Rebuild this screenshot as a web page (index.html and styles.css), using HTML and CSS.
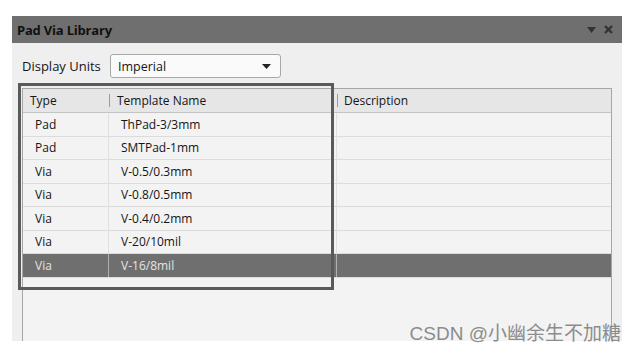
FILE: index.html
```html
<!DOCTYPE html>
<html lang="en">
<head>
  <meta charset="UTF-8">
  <title>Pad Via Library</title>
  <link rel="stylesheet" href="styles.css">
</head>
<body>
  <div class="panel">
    <div class="title-bar">
      <span class="title">Pad Via Library</span>
      <span class="title-icons">
        <svg width="9" height="6" viewBox="0 0 9 6"><path d="M0 0 L9 0 L4.5 6 Z" fill="#333"/></svg>
        <svg width="9" height="9" viewBox="0 0 9 9"><path d="M1 1 L8 8 M8 1 L1 8" stroke="#333" stroke-width="2.4"/></svg>
      </span>
    </div>
    <div class="panel-body">
      <div class="units-row">
        <label>Display Units</label>
        <div class="select">
          <span>Imperial</span>
          <svg width="9" height="5" viewBox="0 0 9 5"><path d="M0 0 L9 0 L4.5 5 Z" fill="#222"/></svg>
        </div>
      </div>
      <div class="grid">
        <div class="grid-row head">
          <div class="cell">Type</div>
          <div class="cell">Template Name</div>
          <div class="cell">Description</div>
        </div>
        <div class="grid-row"><div class="cell">Pad</div><div class="cell">ThPad-3/3mm</div><div class="cell"></div></div>
        <div class="grid-row"><div class="cell">Pad</div><div class="cell">SMTPad-1mm</div><div class="cell"></div></div>
        <div class="grid-row"><div class="cell">Via</div><div class="cell">V-0.5/0.3mm</div><div class="cell"></div></div>
        <div class="grid-row"><div class="cell">Via</div><div class="cell">V-0.8/0.5mm</div><div class="cell"></div></div>
        <div class="grid-row"><div class="cell">Via</div><div class="cell">V-0.4/0.2mm</div><div class="cell"></div></div>
        <div class="grid-row"><div class="cell">Via</div><div class="cell">V-20/10mil</div><div class="cell"></div></div>
        <div class="grid-row selected"><div class="cell">Via</div><div class="cell">V-16/8mil</div><div class="cell"></div></div>
      </div>
    </div>
    <div class="highlight-box"></div>
  </div>
  <div class="watermark">CSDN @小幽余生不加糖</div>
</body>
</html>
```

FILE: styles.css
```css
* {
  margin: 0;
  padding: 0;
  box-sizing: border-box;
}

body {
  font-family: 'Open Sans', 'Noto Sans', sans-serif;
  font-size: 12px;
  color: #151515;
  background: #fff;
  width: 635px;
  height: 351px;
  overflow: hidden;
  position: relative;
}

.panel {
  position: relative;
  margin: 16px 0 0 12px;
  width: 610px;
  height: 325px;
  background: #efefef;
  overflow: hidden;
}

.title-bar {
  height: 27px;
  background: #6f6f6f;
  display: flex;
  align-items: center;
  justify-content: space-between;
  padding: 0 9px 0 5px;
}

.title {
  font-weight: 700;
  color: #111;
  font-size: 13px;
  letter-spacing: -0.2px;
}

.title-icons {
  display: flex;
  align-items: center;
  gap: 8px;
}

.panel-body {
  padding: 11px 10px 0 10px;
  height: 298px;
  display: flex;
  flex-direction: column;
}

.units-row {
  display: flex;
  align-items: center;
  height: 24px;
}

.units-row label {
  width: 88px;
  font-size: 13px;
}

.select {
  width: 171px;
  height: 24px;
  border: 1px solid #a8a8a8;
  border-radius: 3px;
  background: #fafafa;
  display: flex;
  align-items: center;
  justify-content: space-between;
  padding: 0 9px 0 7px;
  font-size: 12.5px;
}

.grid {
  margin-top: 10px;
  flex: 1;
  border: 1px solid #a6a6a6;
  border-bottom: none;
  background: #f3f3f3;
}

.grid-row {
  display: grid;
  grid-template-columns: 86px 228px 1fr;
  height: 23.5px;
  border-bottom: 1px solid #dcdcdc;
}

.grid-row .cell {
  display: flex;
  align-items: center;
  padding-left: 12px;
  border-right: 1px solid #e0e0e0;
}

.grid-row .cell:last-child {
  border-right: none;
}

.grid-row.head {
  height: 24px;
  background: #e6e6e6;
  border-bottom: 1px solid #c4c4c4;
}

.grid-row.head .cell {
  padding-left: 7px;
  border-right: none;
  position: relative;
}

.grid-row.head .cell + .cell::before {
  content: "";
  position: absolute;
  left: 0;
  top: 5px;
  bottom: 5px;
  border-left: 1px solid #9a9a9a;
}

.grid-row.head .cell:nth-child(2) {
  padding-left: 8px;
}

.grid-row.selected {
  background: #6f6f6f;
  color: #e4e4e4;
}

.grid-row.selected .cell {
  border-right-color: #b0b0b0;
}

.highlight-box {
  position: absolute;
  left: 6px;
  top: 67px;
  width: 316px;
  height: 207px;
  border: 3px solid #5a5a5a;
}

.watermark {
  position: absolute;
  right: 14px;
  top: 318px;
  font-family: 'Liberation Sans', 'Noto Sans CJK SC', sans-serif;
  font-size: 19px;
  color: #8c8c8c;
}
```
